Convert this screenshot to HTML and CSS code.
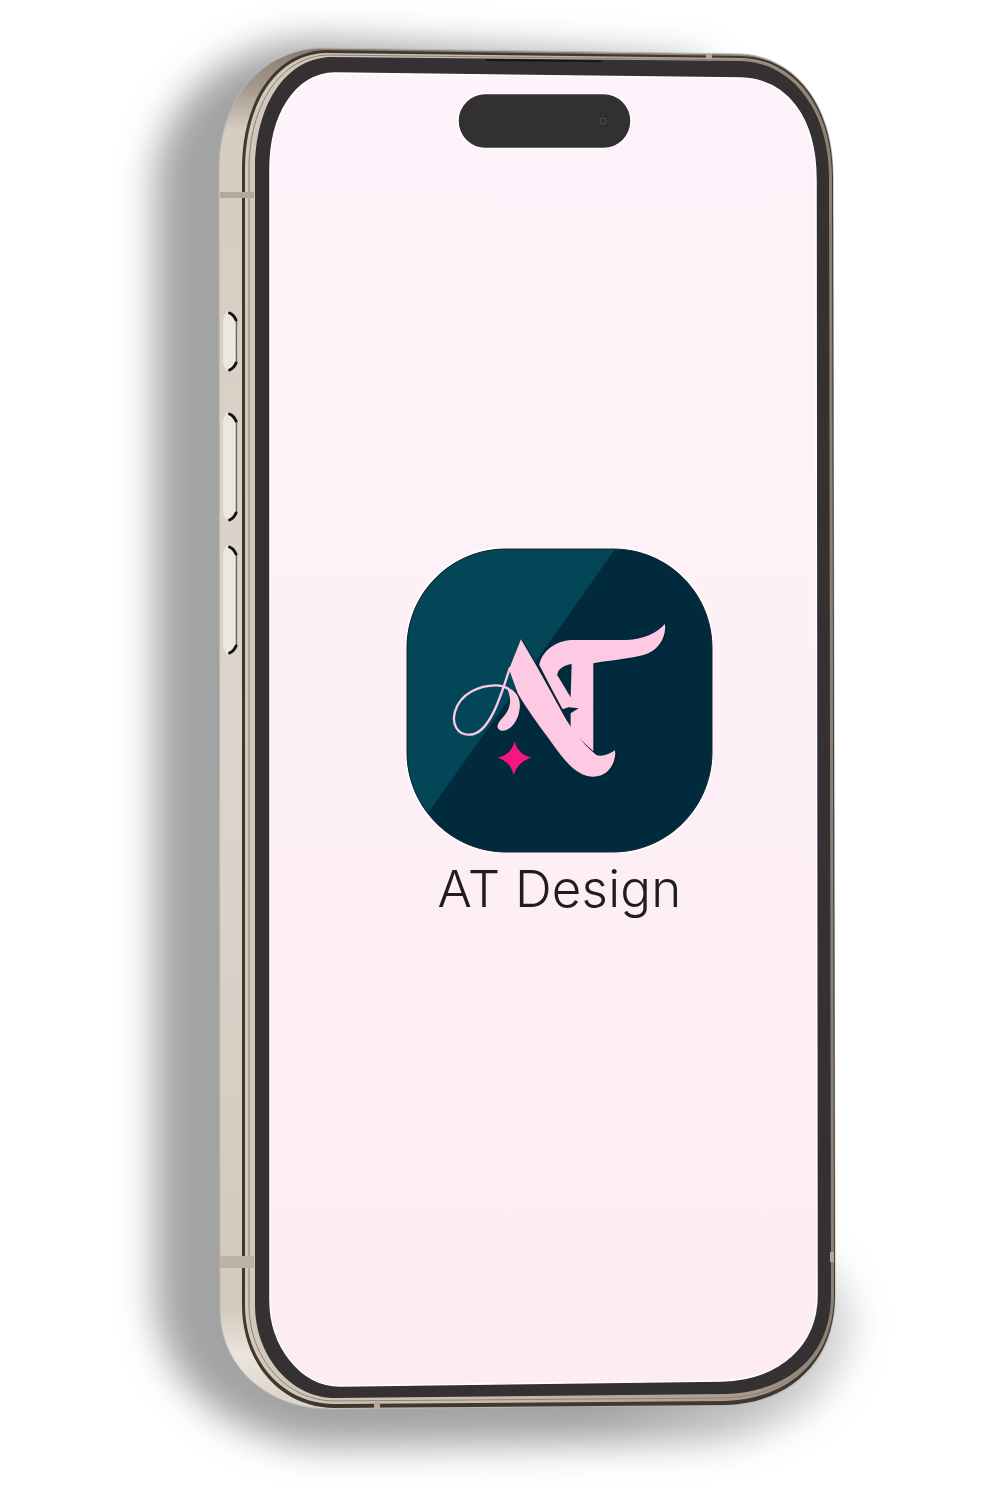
FILE: index.html
```html
<!DOCTYPE html>
<html lang="en">
<head>
<meta charset="utf-8">
<title>AT Design</title>
<link rel="stylesheet" href="styles.css">
</head>
<body>
<main class="stage">
  <svg class="phone" viewBox="0 0 1000 1500" width="1000" height="1500" aria-hidden="true">
    <defs>
      <filter id="blur-wide" x="-20%" y="-20%" width="140%" height="140%"><feGaussianBlur stdDeviation="18"/></filter>
      <linearGradient id="cast" gradientUnits="userSpaceOnUse" x1="0" y1="0" x2="1000" y2="0">
        <stop offset=".6" stop-color="#777" stop-opacity=".68"/>
        <stop offset=".85" stop-color="#777" stop-opacity=".3"/>
      </linearGradient>
      <linearGradient id="metal" x1="0" y1="0" x2="0" y2="1">
        <stop offset="0" stop-color="#8a7c6f"/>
        <stop offset=".03" stop-color="#a69a8d"/>
        <stop offset=".06" stop-color="#d6ccc1"/>
        <stop offset=".5" stop-color="#ddd5cd"/>
        <stop offset=".925" stop-color="#d3c9be"/>
        <stop offset=".96" stop-color="#ebe5dd"/>
        <stop offset="1" stop-color="#dcd2c6"/>
      </linearGradient>
      <linearGradient id="strip" x1="0" y1="0" x2="1" y2="0">
        <stop offset="0" stop-color="#d2c8bc"/>
        <stop offset=".4" stop-color="#c8bdb0"/>
        <stop offset=".85" stop-color="#a89b8d"/>
        <stop offset="1" stop-color="#8c7f72"/>
      </linearGradient>
      <linearGradient id="screen" x1="0" y1="0" x2="0" y2="1">
        <stop offset="0" stop-color="#fef3fa"/>
        <stop offset="1" stop-color="#fdecf3"/>
      </linearGradient>
    </defs>

    <path class="shadow-main" filter="url(#blur-wide)" d="M320 40 L700 60 L790 300 L790 1240 C830 1270 852 1290 852 1320 C852 1385 790 1438 700 1441 L340 1447 C235 1447 155 1385 155 1290 L155 190 C155 100 230 40 320 40Z"/>

    <path class="body" d="M320 48 L740 54 C795 56 833 105 833 175 L835 1295 C835 1365 790 1403 725 1405 L330 1409 C265 1409 220 1365 220 1310 L219 170 C219 95 265 50 320 48Z"/>
    <path class="rail" d="M325 50 L742 56 C797 58 833 107 833 177 L835 1295 C835 1362 790 1403 725 1405 L335 1408 C280 1408 242 1362 242 1305 L242 170 C242 100 275 52 325 50Z"/>
    <path class="band" d="M325 53 L742 58 C795 60 832 108 832 177 L834 1295 C834 1360 788 1399 725 1401 L335 1404 C282 1404 245 1360 245 1305 L245 170 C245 102 277 55 325 53Z"/>
    <path class="groove" d="M327 55 L742 60 C794 62 831 109 831 177 L833 1295 C833 1359 787 1396 725 1398 L335 1401 C286 1401 249 1358 249 1305 L249 170 C249 104 281 57 327 55Z"/>
    <path class="bezel" d="M330 57 L742 61 C792 63 829 110 829 177 L831 1295 C831 1358 786 1392 725 1394 L335 1398 C290 1398 255 1355 255 1305 L255 170 C255 105 285 59 330 57Z"/>
    <path class="speaker" d="M486 59 L602 60.500 L602 62 L486 61Z"/>
    <path class="screen" d="M335 73 L742 78 C785 80 816 115 816 180 L817 1295 C817 1345 780 1379 722 1381 L340 1386 C300 1386 270 1345 270 1300 L270 170 C270 115 295 74 335 73Z"/>

    <rect class="antenna" x="220" y="192" width="34" height="6"/>
    <rect class="antenna-dark" x="220" y="1256" width="34" height="12"/>
    <rect class="antenna" x="706" y="54" width="6" height="5"/>
    <rect class="antenna" x="374" y="1402" width="6" height="6"/>
    <rect class="antenna" x="830" y="1252" width="4" height="10"/>

    <g>
      <path class="key" d="M229 311 Q238 315 238 326 L238 358 Q238 368 229 372 Q223 368 223 360 L223 322 Q223 314 229 311Z"/>
      <path class="key-line" d="M236.500 320 L236.500 363"/>
      <path class="key-end" d="M229.500 313 Q234 315 236 320 M229.500 370 Q234 368 236 363"/>
      <path class="key" d="M229 412 Q238 416 238 427 L238 508 Q238 518 229 522 Q223 518 223 510 L223 423 Q223 415 229 412Z"/>
      <path class="key-line" d="M236.500 421 L236.500 513"/>
      <path class="key-end" d="M229.500 414 Q234 416 236 421 M229.500 520 Q234 518 236 513"/>
      <path class="key" d="M229 545 Q238 549 238 560 L238 640 Q238 650 229 655 Q223 651 223 643 L223 556 Q223 548 229 545Z"/>
      <path class="key-line" d="M236.500 554 L236.500 646"/>
      <path class="key-end" d="M229.500 547 Q234 549 236 554 M229.500 653 Q234 651 236 646"/>
    </g>

    <rect class="island" x="458" y="93.500" width="173" height="55" rx="27.500"/>
    <circle class="lens" cx="603" cy="121" r="6"/>
    <circle class="lens-ring" cx="603" cy="121" r="3"/>
  </svg>

  <section class="app">
    <svg class="app-logo" viewBox="0 0 307 305" width="307" height="305" role="img" aria-label="AT Design logo">
      <defs>
        <clipPath id="tile"><path d="M100 1 L207 1 C262 1 306 45 306 100 L306 204 C306 259 262 304 207 304 L100 304 C45 304 1 259 1 204 L1 100 C1 45 45 1 100 1Z"/></clipPath>
      </defs>
      <path class="tile-halo" d="M100 1 L207 1 C262 1 306 45 306 100 L306 204 C306 259 262 304 207 304 L100 304 C45 304 1 259 1 204 L1 100 C1 45 45 1 100 1Z"/>
      <g clip-path="url(#tile)">
        <rect class="tile-dark" width="307" height="305"/>
        <path class="tile-light" d="M0 0 L210 0 L10 282 L0 282Z"/>
      </g>
      <path class="tile-rim" d="M100 1 L207 1 C262 1 306 45 306 100 L306 204 C306 259 262 304 207 304 L100 304 C45 304 1 259 1 204 L1 100 C1 45 45 1 100 1Z"/>
      <g transform="translate(34 62) scale(.3333)">
        <path class="mark-shade" d="M298 165 C305 125 345 92 395 90 L560 90 C610 88 650 70 675 42 C680 75 660 115 625 130 C590 145 530 148 460 160 L460 424 L392 362 L392 310 L416 295 L386 292 L368 298 L342 250Z"/>
        <path class="mark-shade" d="M243 88 L288 165 C305 195 330 240 358 292 C385 345 420 395 470 436 C490 440 510 432 525 421 C530 450 510 500 460 500 C420 500 385 470 340 405 C300 350 262 300 233 250 L207 178Z"/>
        <path class="mark" d="M298 165 C305 125 345 92 395 90 L560 90 C610 88 650 70 675 42 C680 75 660 115 625 130 C590 145 530 148 460 160 L460 424 L392 362 L392 310 L416 295 L386 292 L368 298 L342 250Z"/>
        <path class="mark-cut" d="M395 162 C365 168 352 180 352 196 L392 262Z"/>
        <path class="mark" d="M243 88 L288 165 C305 195 330 240 358 292 C385 345 420 395 470 436 C490 440 510 432 525 421 C530 450 510 500 460 500 C420 500 385 470 340 405 C300 350 262 300 233 250 L207 178Z"/>
        <path class="mark-loop" d="M210 172 C185 250 150 372 90 374 C50 376 35 340 45 305 C60 250 120 225 170 226 C185 226 195 230 205 236"/>
        <path class="mark" d="M200 232 C230 240 245 270 238 302 C232 340 205 365 185 362 C168 358 170 345 182 330 C205 305 222 280 200 232Z"/>
        <path class="spark" d="M172 443 C200 438 218 420 224 393 C230 420 248 438 275 443 C248 450 230 468 221 495 C215 468 198 450 172 443Z"/>
      </g>
    </svg>
    <h1 class="app-name">AT Design</h1>
  </section>
</main>
</body>
</html>
```

FILE: styles.css
```css
html, body {
  margin: 0;
  padding: 0;
  background: #fff;
}

.stage {
  position: relative;
  width: 1000px;
  height: 1500px;
  overflow: hidden;
}

.phone {
  position: absolute;
  inset: 0;
  display: block;
}

.shadow-main { fill: url(#cast); }

.body { fill: url(#metal); stroke: #b4b6b6; stroke-width: 1; }
.rail { fill: #40372f; }
.band { fill: url(#strip); }
.groove { fill: none; stroke: #8d8275; stroke-width: 1; }
.bezel { fill: #353132; }
.speaker { fill: #151314; }
.screen { fill: url(#screen); stroke: #fff; stroke-width: 1.500; }

.antenna { fill: #b3a89b; }
.antenna-dark { fill: #bdb2a6; }

.key { fill: #ece7e1; }
.key-line { fill: none; stroke: #6b6157; stroke-width: 1.500; }
.key-end { fill: none; stroke: #141211; stroke-width: 3; stroke-linecap: round; }

.island { fill: #333031; stroke: #fff; stroke-width: 1.500; }
.lens { fill: #2e2b2d; }
.lens-ring { fill: none; stroke: #3f4a50; stroke-width: 1.500; }

.app {
  position: absolute;
  left: 406px;
  top: 548px;
  width: 307px;
  display: flex;
  flex-direction: column;
  align-items: center;
}

.app-logo { display: block; }

.tile-halo { fill: none; stroke: #fff; stroke-width: 4; }
.tile-rim { fill: none; stroke: #10262f; stroke-width: 1; }
.tile-dark { fill: #012a3d; }
.tile-light { fill: #024657; }

.mark { fill: #fdc9e3; }
.mark-shade { fill: #01202f; stroke: #01202f; stroke-width: 3; transform: translate(3px, 2px); }
.mark-loop { fill: none; stroke: #fdc9e3; stroke-width: 7; }
.mark-cut { fill: #012a3d; }
.spark { fill: #f8157f; }

.app-name {
  margin: 6px 0 0;
  font-family: "Inter", "Liberation Sans", sans-serif;
  font-size: 51px;
  font-weight: 300;
  letter-spacing: .2px;
  line-height: 60px;
  color: #1f1d1e;
  white-space: nowrap;
}
```
